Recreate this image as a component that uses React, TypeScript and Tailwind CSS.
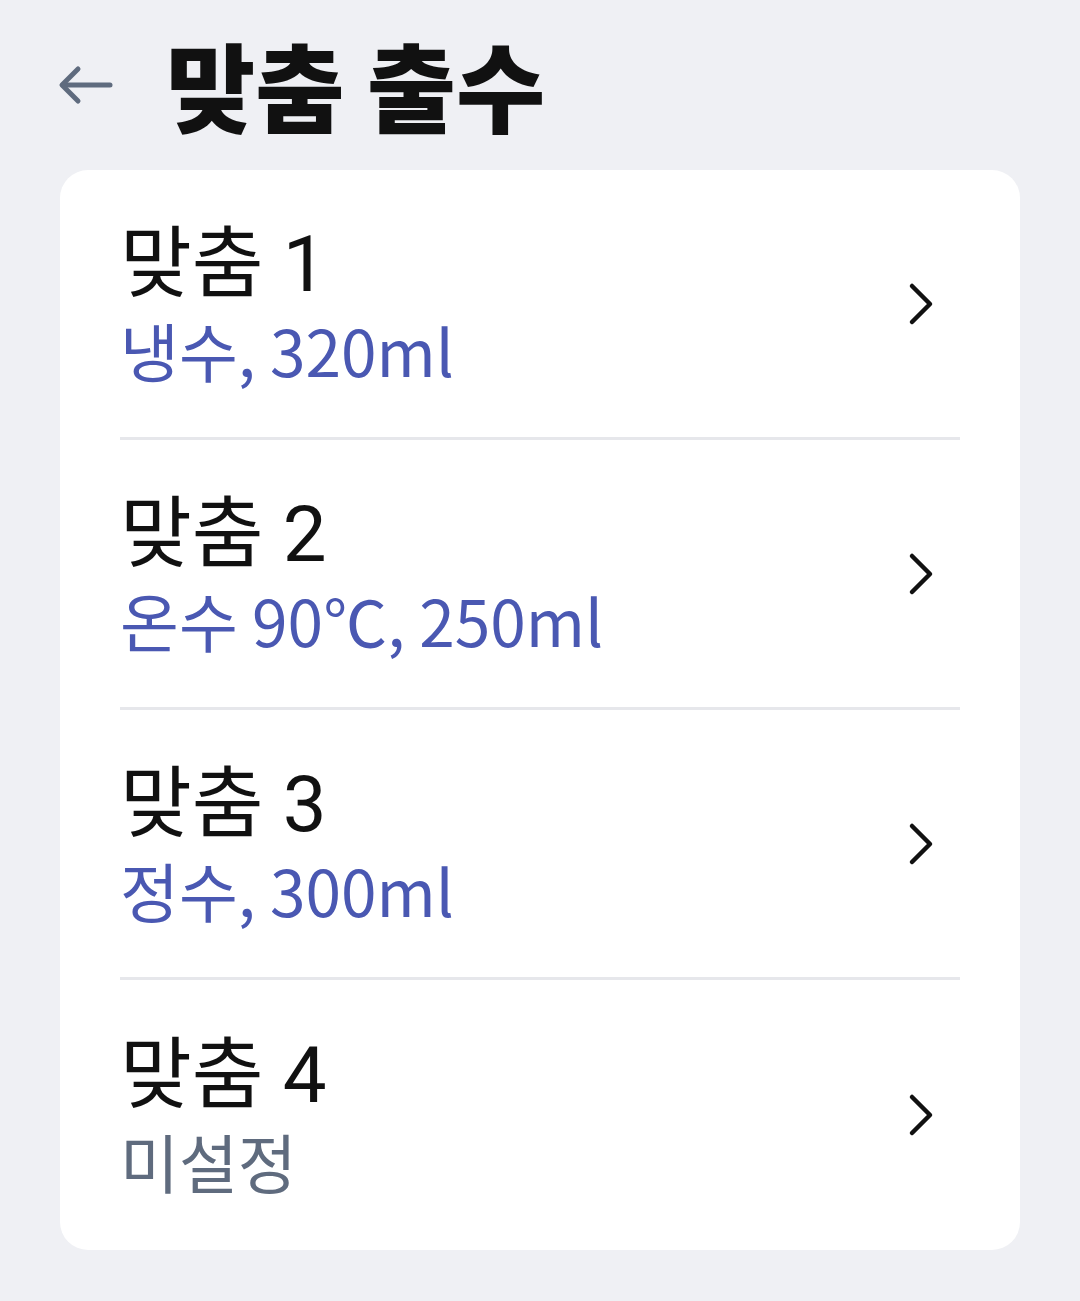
const presets = [
  { name: "맞춤 1", desc: "냉수, 320ml", set: true },
  { name: "맞춤 2", desc: "온수 90℃, 250ml", set: true },
  { name: "맞춤 3", desc: "정수, 300ml", set: true },
  { name: "맞춤 4", desc: "미설정", set: false },
];

function Chevron() {
  return (
    <svg width="28" height="44" viewBox="0 0 28 44" fill="none" stroke="#111111" strokeWidth="4.5" strokeLinecap="round" strokeLinejoin="round">
      <path d="M4 4L22 22L4 40" />
    </svg>
  );
}

export default function App() {
  return (
    <div
      className="min-h-[1301px] w-[1080px] bg-[#eff0f4] px-[60px] font-['Noto_Sans_CJK_KR',sans-serif]"
    >
      <header className="flex h-[170px] items-center">
        <button className="-ml-[4px] flex h-[60px] w-[60px] items-center justify-center text-[#5f6b7e]" aria-label="뒤로">
          <svg width="56" height="40" viewBox="0 0 56 40" fill="none" stroke="currentColor" strokeWidth="5" strokeLinecap="round" strokeLinejoin="round">
            <path d="M52 20H5" />
            <path d="M20 4L4 20L20 36" />
          </svg>
        </button>
        <h1 className="ml-[50px] -mt-[6px] text-[97px] font-black leading-none text-[#111111]">맞춤 출수</h1>
      </header>

      <div className="rounded-[28px] bg-white px-[60px]">
        {presets.map((p, i) => (
          <div
            key={p.name}
            className={`flex h-[270px] items-center justify-between ${i < presets.length - 1 ? "border-b-[3px] border-[#e6e7eb]" : ""}`}
          >
            <div className="flex flex-col">
              <span className="pt-[8px] font-['Roboto','Noto_Sans_CJK_KR',sans-serif] text-[78px] leading-[82px] text-[#111111]">
                {p.name}
              </span>
              <span className={`text-[64px] leading-[86px] ${p.set ? "text-[#4a58b2]" : "text-[#5f6b7e]"}`}>{p.desc}</span>
            </div>
            <div className="mr-[24px]">
              <Chevron />
            </div>
          </div>
        ))}
      </div>
    </div>
  );
}
